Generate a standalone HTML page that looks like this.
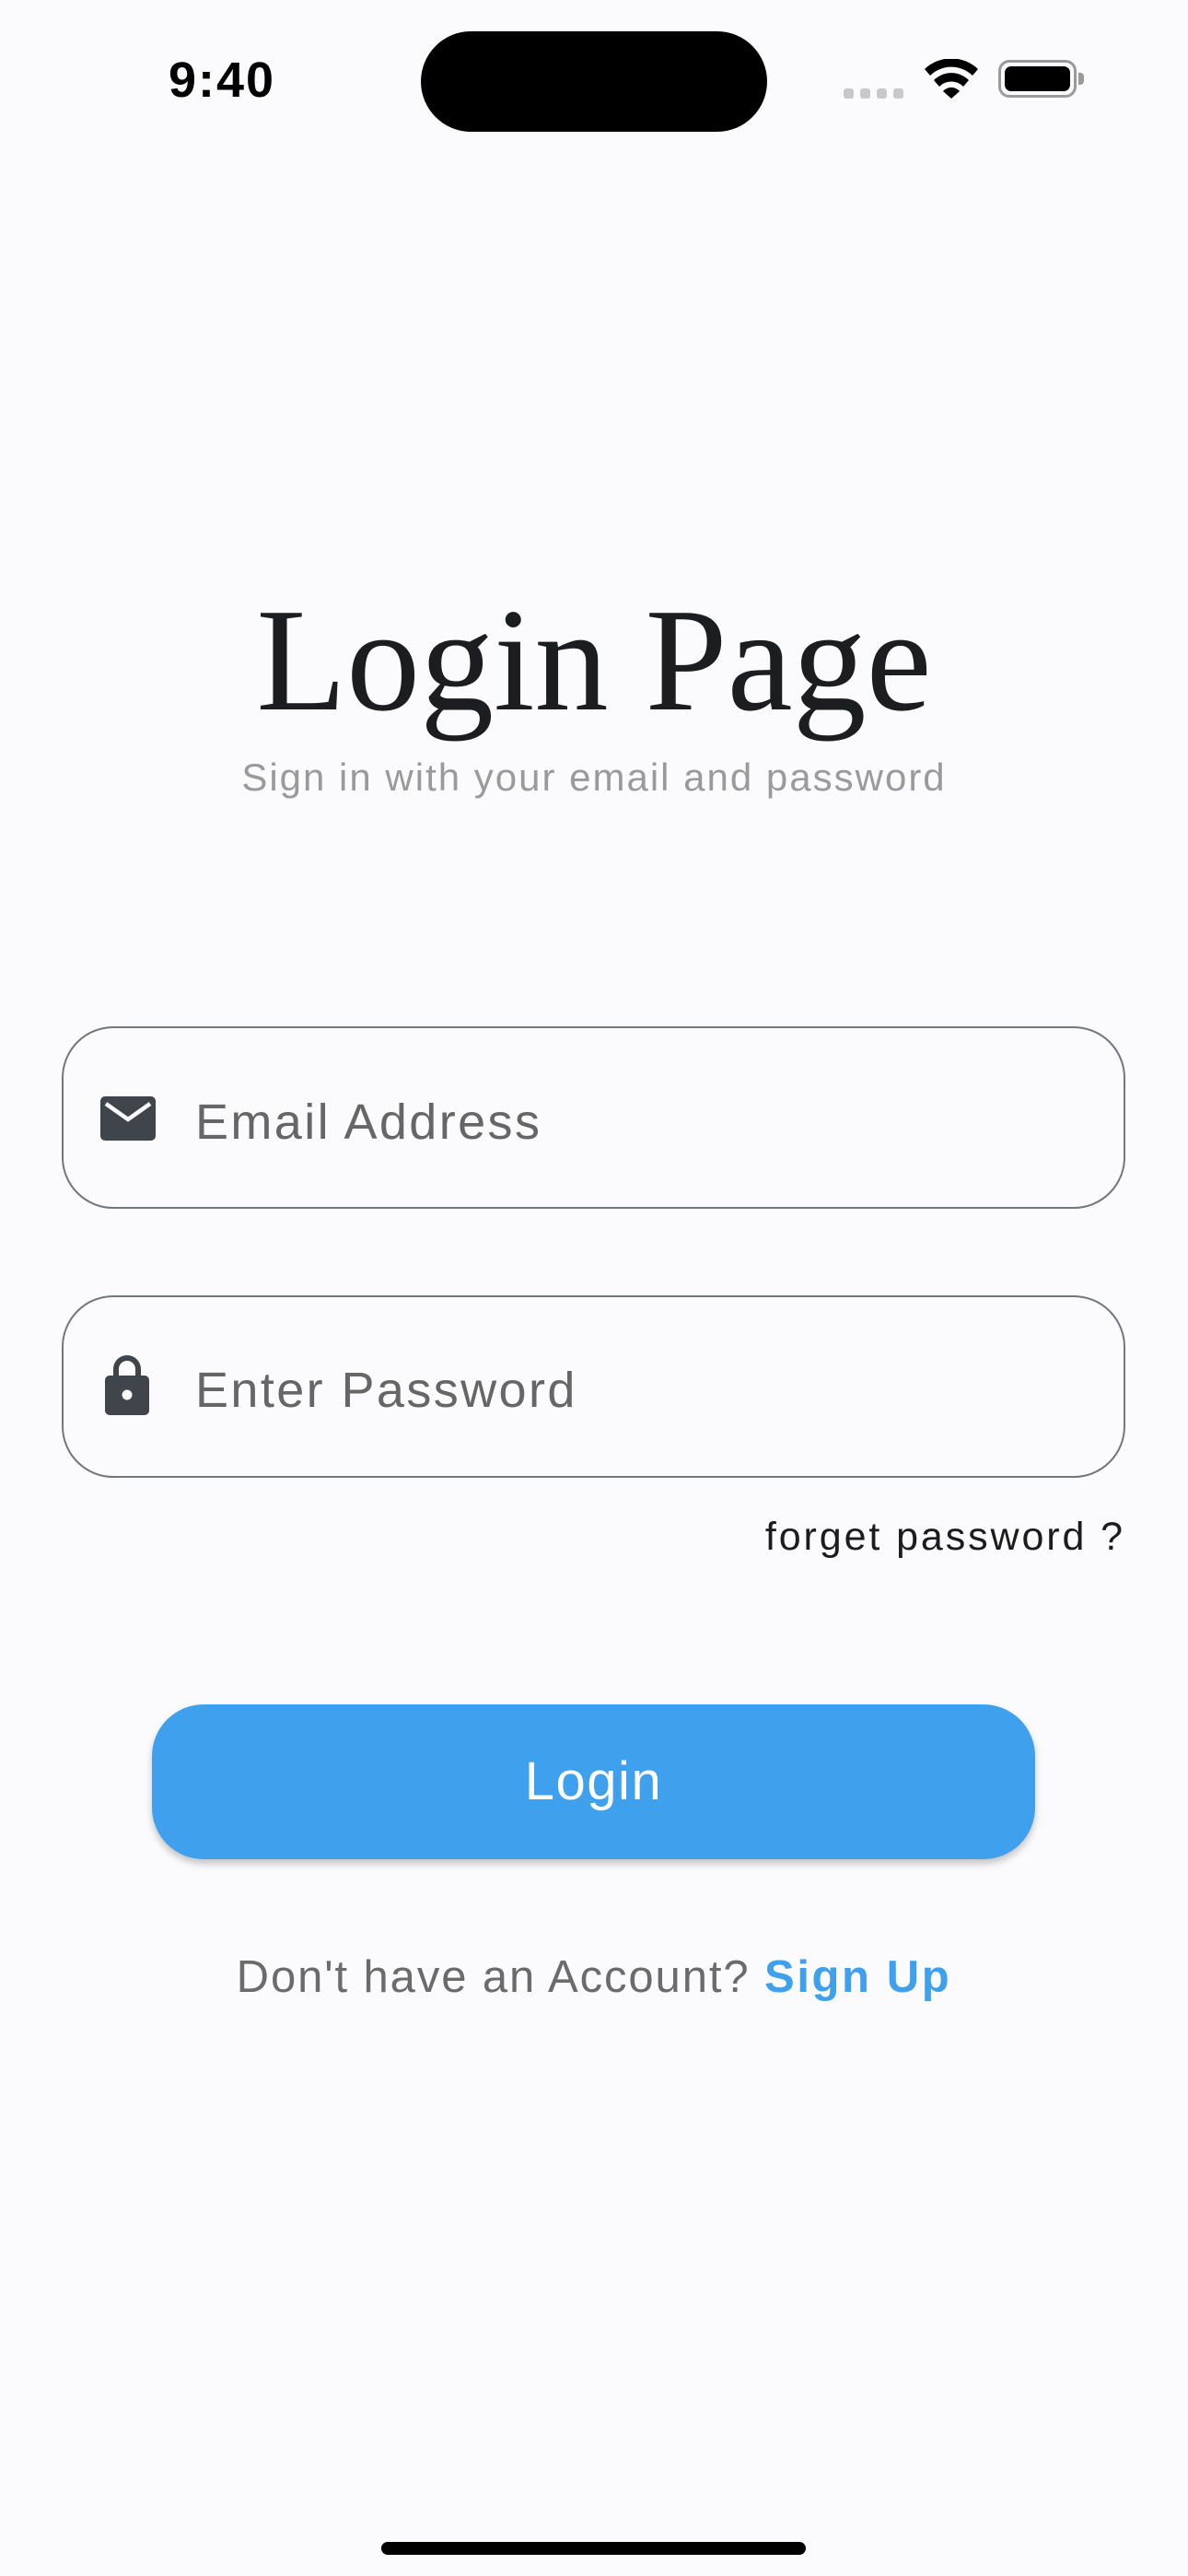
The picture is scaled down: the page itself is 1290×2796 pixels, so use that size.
<!DOCTYPE html>
<html><head><meta charset="utf-8">
<style>
*{margin:0;padding:0;box-sizing:border-box}
html,body{width:1290px;height:2796px;background:#fbfbfd;overflow:hidden;position:relative;font-family:"Liberation Sans",sans-serif}
.a{position:absolute}
.box{position:absolute;left:67px;width:1155px;height:198px;border:2.5px solid #72767e;border-radius:56px}
.ph{position:absolute;left:212px;font-size:54px;color:#666;letter-spacing:2.4px;white-space:nowrap;line-height:1}
</style></head><body>
<div class="a" style="left:183px;top:60px;font-size:54px;font-weight:bold;color:#000;line-height:54px;letter-spacing:2px">9:40</div>
<div class="a" style="left:457px;top:34px;width:376px;height:109px;border-radius:55px;background:#000"></div>
<div class="a" style="left:916px;top:96px;width:11px;height:11px;border-radius:3px;background:#c8c8ca"></div>
<div class="a" style="left:934px;top:96px;width:11px;height:11px;border-radius:3px;background:#c8c8ca"></div>
<div class="a" style="left:952px;top:96px;width:11px;height:11px;border-radius:3px;background:#c8c8ca"></div>
<div class="a" style="left:970px;top:96px;width:11px;height:11px;border-radius:3px;background:#c8c8ca"></div>
<svg class="a" style="left:1003px;top:64px" width="60" height="44" viewBox="0 0 60 44">
<path d="M1 11 A42 42 0 0 1 59 11 L53 18 A33 33 0 0 0 7 18 Z" fill="#000"/>
<path d="M11 23 A27 27 0 0 1 49 23 L43 30 A18 18 0 0 0 17 30 Z" fill="#000"/>
<path d="M21 35 A12 12 0 0 1 39 35 L30 43 Z" fill="#000"/>
</svg>
<div class="a" style="left:1084px;top:65px;width:85px;height:41px;border:3px solid #9a9a9c;border-radius:12px"></div>
<div class="a" style="left:1091px;top:72px;width:71px;height:27px;border-radius:7px;background:#000"></div>
<div class="a" style="left:1171px;top:79px;width:6px;height:13px;border-radius:0 4px 4px 0;background:#9a9a9c"></div>

<div class="a" style="left:0;width:1290px;top:626px;text-align:center;font-family:'Liberation Serif',serif;font-size:160px;color:#1c1d20;line-height:180px;white-space:nowrap">Login Page</div>
<div class="a" style="left:0;width:1290px;top:821px;text-align:center;font-size:42px;color:#9a9a9a;letter-spacing:2.0px;line-height:46px;white-space:nowrap">Sign in with your email and password</div>

<div class="box" style="top:1114px"></div>
<svg class="a" style="left:109px;top:1190px" width="60" height="48" viewBox="0 0 60 48">
<rect x="0" y="0" width="60" height="48" rx="5" fill="#40444b"/>
<path d="M6 8 L30 25 L54 8" fill="none" stroke="#fbfbfd" stroke-width="4.5"/>
</svg>
<div class="ph" style="top:1191px">Email Address</div>

<div class="box" style="top:1406px"></div>
<svg class="a" style="left:114px;top:1471px" width="48" height="65" viewBox="0 0 48 65">
<path d="M12 24 V15 A12 12 0 0 1 36 15 V24" fill="none" stroke="#40444b" stroke-width="6"/>
<rect x="0" y="22" width="48" height="43" rx="5" fill="#40444b"/>
<circle cx="24" cy="43" r="5.5" fill="#fbfbfd"/>
</svg>
<div class="ph" style="top:1482px">Enter Password</div>

<div class="a" style="right:68px;top:1644px;font-size:43px;color:#1c1c1c;letter-spacing:2.9px;line-height:48px;white-space:nowrap">forget password ?</div>

<div class="a" style="left:165px;top:1850px;width:959px;height:168px;border-radius:56px;background:#3fa1ee;box-shadow:0 5px 8px rgba(0,0,0,0.22);color:#fff;font-size:58px;text-align:center;line-height:168px;letter-spacing:1.5px">Login</div>

<div class="a" style="left:0;width:1290px;top:2119px;text-align:center;font-size:49px;line-height:54px;white-space:nowrap;letter-spacing:1.9px;color:#6b6b6b">Don't have an Account? <b style="color:#3fa1ee;letter-spacing:2.6px">Sign Up</b></div>

<div class="a" style="left:414px;top:2759px;width:461px;height:14px;border-radius:7px;background:#000"></div>
</body></html>
